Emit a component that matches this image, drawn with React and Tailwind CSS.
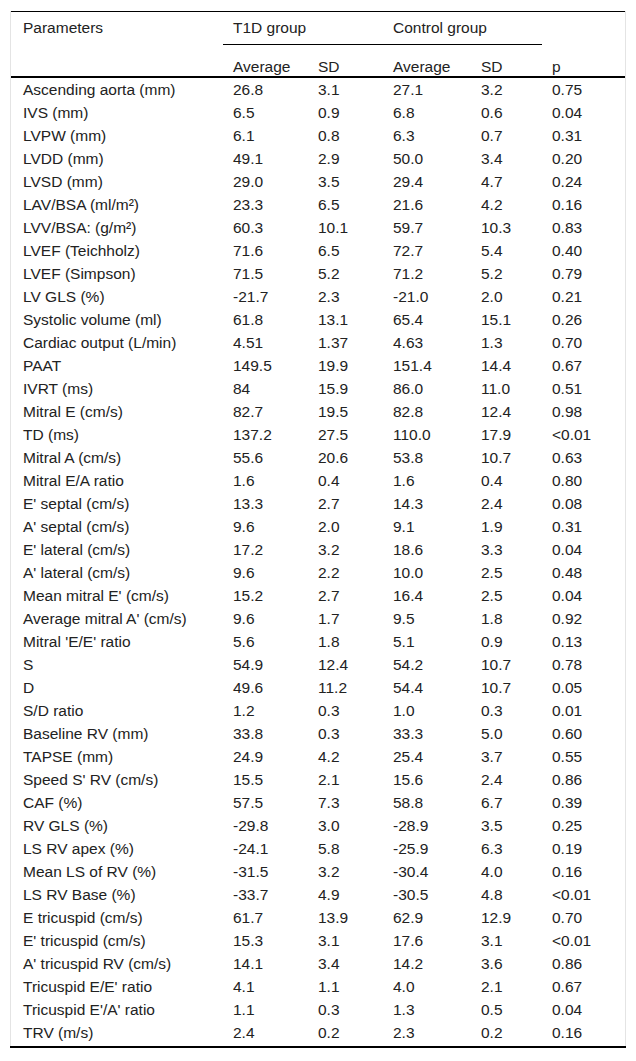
const rows = [
    ['Ascending aorta (mm)', '26.8', '3.1', '27.1', '3.2', '0.75'],
    ['IVS (mm)', '6.5', '0.9', '6.8', '0.6', '0.04'],
    ['LVPW (mm)', '6.1', '0.8', '6.3', '0.7', '0.31'],
    ['LVDD (mm)', '49.1', '2.9', '50.0', '3.4', '0.20'],
    ['LVSD (mm)', '29.0', '3.5', '29.4', '4.7', '0.24'],
    ['LAV/BSA (ml/m²)', '23.3', '6.5', '21.6', '4.2', '0.16'],
    ['LVV/BSA: (g/m²)', '60.3', '10.1', '59.7', '10.3', '0.83'],
    ['LVEF (Teichholz)', '71.6', '6.5', '72.7', '5.4', '0.40'],
    ['LVEF (Simpson)', '71.5', '5.2', '71.2', '5.2', '0.79'],
    ['LV GLS (%)', '-21.7', '2.3', '-21.0', '2.0', '0.21'],
    ['Systolic volume (ml)', '61.8', '13.1', '65.4', '15.1', '0.26'],
    ['Cardiac output (L/min)', '4.51', '1.37', '4.63', '1.3', '0.70'],
    ['PAAT', '149.5', '19.9', '151.4', '14.4', '0.67'],
    ['IVRT (ms)', '84', '15.9', '86.0', '11.0', '0.51'],
    ['Mitral E (cm/s)', '82.7', '19.5', '82.8', '12.4', '0.98'],
    ['TD (ms)', '137.2', '27.5', '110.0', '17.9', '<0.01'],
    ['Mitral A (cm/s)', '55.6', '20.6', '53.8', '10.7', '0.63'],
    ['Mitral E/A ratio', '1.6', '0.4', '1.6', '0.4', '0.80'],
    ["E' septal (cm/s)", '13.3', '2.7', '14.3', '2.4', '0.08'],
    ["A' septal (cm/s)", '9.6', '2.0', '9.1', '1.9', '0.31'],
    ["E' lateral (cm/s)", '17.2', '3.2', '18.6', '3.3', '0.04'],
    ["A' lateral (cm/s)", '9.6', '2.2', '10.0', '2.5', '0.48'],
    ["Mean mitral E' (cm/s)", '15.2', '2.7', '16.4', '2.5', '0.04'],
    ["Average mitral A' (cm/s)", '9.6', '1.7', '9.5', '1.8', '0.92'],
    ["Mitral 'E/E' ratio", '5.6', '1.8', '5.1', '0.9', '0.13'],
    ['S', '54.9', '12.4', '54.2', '10.7', '0.78'],
    ['D', '49.6', '11.2', '54.4', '10.7', '0.05'],
    ['S/D ratio', '1.2', '0.3', '1.0', '0.3', '0.01'],
    ['Baseline RV (mm)', '33.8', '0.3', '33.3', '5.0', '0.60'],
    ['TAPSE (mm)', '24.9', '4.2', '25.4', '3.7', '0.55'],
    ["Speed S' RV (cm/s)", '15.5', '2.1', '15.6', '2.4', '0.86'],
    ['CAF (%)', '57.5', '7.3', '58.8', '6.7', '0.39'],
    ['RV GLS (%)', '-29.8', '3.0', '-28.9', '3.5', '0.25'],
    ['LS RV apex (%)', '-24.1', '5.8', '-25.9', '6.3', '0.19'],
    ['Mean LS of RV (%)', '-31.5', '3.2', '-30.4', '4.0', '0.16'],
    ['LS RV Base (%)', '-33.7', '4.9', '-30.5', '4.8', '<0.01'],
    ['E tricuspid (cm/s)', '61.7', '13.9', '62.9', '12.9', '0.70'],
    ["E' tricuspid (cm/s)", '15.3', '3.1', '17.6', '3.1', '<0.01'],
    ["A' tricuspid RV (cm/s)", '14.1', '3.4', '14.2', '3.6', '0.86'],
    ["Tricuspid E/E' ratio", '4.1', '1.1', '4.0', '2.1', '0.67'],
    ["Tricuspid E'/A' ratio", '1.1', '0.3', '1.3', '0.5', '0.04'],
    ['TRV (m/s)', '2.4', '0.2', '2.3', '0.2', '0.16'],
];

const cols = 'grid grid-cols-[212px_85px_75px_88px_71px_1fr]';

export default function App() {
    return (
        <div className="min-h-screen bg-white pt-[11px] text-[15.5px] leading-[17px] text-[#222] font-['Liberation_Sans',Arial,sans-serif]">
            <div className="ml-[10px] w-[616px]">
                <div className="border-x border-[#e4e4e4] pb-[2px]">
                    {/* Header */}
                    <div className={`${cols} grid-rows-[33px_31px] border-t border-black border-b-2`}>
                        <div className="row-span-2 pl-3 pt-[7px]">Parameters</div>
                        <div className="col-span-2 pl-[10px] pt-[7px] border-b border-black">T1D group</div>
                        <div className="col-span-2 pl-[10px] pt-[7px] border-b border-black">Control group</div>
                        <div className="row-span-2 flex items-end pl-[10px] pb-px">p</div>
                        <div className="flex items-end pl-[10px] pb-px">Average</div>
                        <div className="flex items-end pl-[10px] pb-px">SD</div>
                        <div className="flex items-end pl-[10px] pb-px">Average</div>
                        <div className="flex items-end pl-[10px] pb-px">SD</div>
                    </div>

                    {/* Body */}
                    {rows.map((r) => (
                        <div key={r[0]} className={`${cols} h-[23px] items-center`}>
                            <div className="pl-3 whitespace-nowrap">{r[0]}</div>
                            {r.slice(1).map((v, i) => (
                                <div key={i} className="pl-[10px]">{v}</div>
                            ))}
                        </div>
                    ))}
                </div>
                <div className="h-[2px] bg-black" />
            </div>
        </div>
    );
}
